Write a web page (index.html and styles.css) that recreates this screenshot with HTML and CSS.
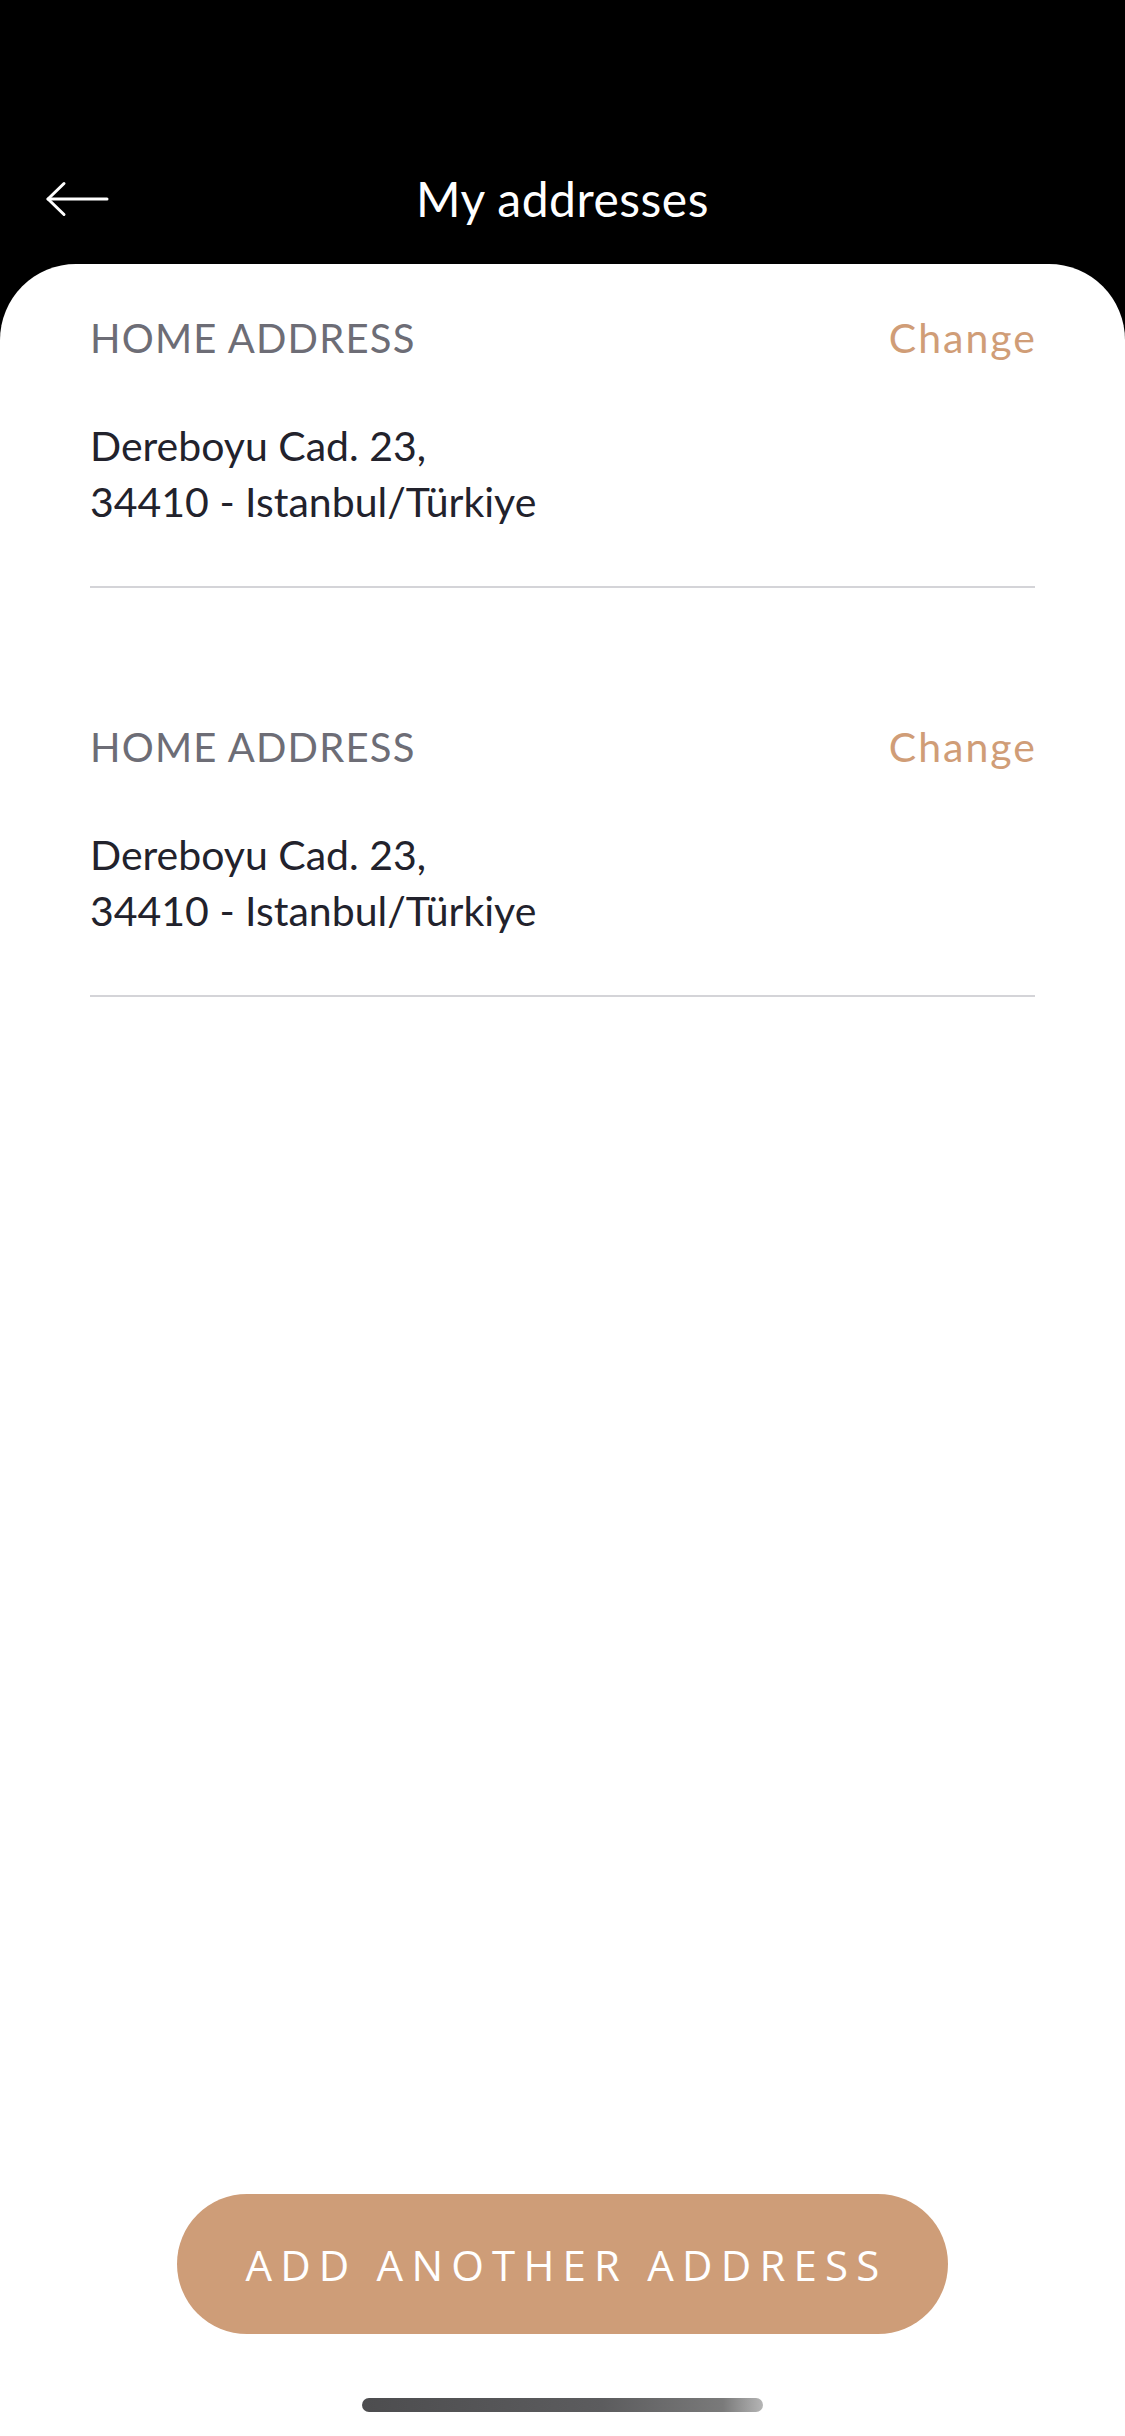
FILE: index.html
```html
<!DOCTYPE html>
<html lang="en">
<head>
<meta charset="utf-8">
<title>My addresses</title>
<link rel="stylesheet" href="styles.css">
</head>
<body>
<div class="screen">
  <header class="topbar">
    <button class="back" aria-label="Back">
      <svg width="64" height="36" viewBox="0 0 64 36" fill="none" stroke="#fff" stroke-width="3" stroke-linecap="round" stroke-linejoin="round">
        <path d="M3 18 H62"/>
        <path d="M19 2.5 L3 18 L19 33.5"/>
      </svg>
    </button>
    <h1 class="title">My addresses</h1>
    <span></span>
  </header>
  <main class="sheet">
    <section class="address">
      <div class="address-head">
        <span class="label">HOME ADDRESS</span>
        <a class="change">Change</a>
      </div>
      <p class="lines">Dereboyu Cad. 23,<br>34410 - Istanbul/Türkiye</p>
    </section>
    <section class="address">
      <div class="address-head">
        <span class="label">HOME ADDRESS</span>
        <a class="change">Change</a>
      </div>
      <p class="lines">Dereboyu Cad. 23,<br>34410 - Istanbul/Türkiye</p>
    </section>
    <div class="footer">
      <button class="add-btn">ADD ANOTHER ADDRESS</button>
      <div class="home-indicator"></div>
    </div>
  </main>
</div>
</body>
</html>
```
FILE: styles.css
```css
html, body {
  margin: 0;
  padding: 0;
  background: #000;
}
.screen {
  width: 1125px;
  height: 2436px;
  display: flex;
  flex-direction: column;
  background: #000;
  font-family: "Lato", "Noto Sans", sans-serif;
}
.topbar {
  height: 264px;
  box-sizing: border-box;
  padding: 169px 45px 0 45px;
  display: grid;
  grid-template-columns: 1fr auto 1fr;
  align-items: start;
}
.back {
  background: none;
  border: 0;
  padding: 0;
  margin: 0;
  height: 60px;
  display: flex;
  align-items: center;
  justify-self: start;
  cursor: pointer;
}
.back svg { display: block; }
.title {
  margin: 0;
  color: #fff;
  font-weight: 400;
  font-size: 48px;
  letter-spacing: 0.5px;
  line-height: 60px;
  text-align: center;
}
.sheet {
  flex: 1;
  background: #fff;
  border-radius: 76px 76px 0 0;
  display: flex;
  flex-direction: column;
  padding: 0 90px;
}
.address {
  margin-top: 131px;
  border-bottom: 2px solid #d4d4d8;
  padding-bottom: 56px;
}
.address:first-child {
  margin-top: 46px;
}
.address-head {
  display: flex;
  justify-content: space-between;
  align-items: baseline;
  line-height: 56px;
}
.label {
  font-size: 40px;
  letter-spacing: 1.2px;
  color: #6d6d76;
}
.change {
  font-size: 41px;
  letter-spacing: 2px;
  margin-right: -2px;
  color: #d09d77;
}
.lines {
  margin: 52px 0 0 0;
  font-size: 41px;
  line-height: 56px;
  color: #22222c;
}
.footer {
  margin-top: auto;
  display: flex;
  flex-direction: column;
  align-items: center;
}
.add-btn {
  width: 771px;
  height: 140px;
  border: 0;
  border-radius: 70px;
  background: #ce9d78;
  color: #fff;
  font-family: "Open Sans", "Noto Sans", sans-serif;
  font-size: 42px;
  letter-spacing: 8.2px;
  padding: 0 0 0 8px;
}
.home-indicator {
  width: 401px;
  height: 14px;
  border-radius: 7px;
  margin: 64px 0 24px 0;
  background: linear-gradient(90deg, #4d4d4f 0%, #5c5c5e 60%, #7a7a7a 90%, #b5b5b5 100%);
}
```
